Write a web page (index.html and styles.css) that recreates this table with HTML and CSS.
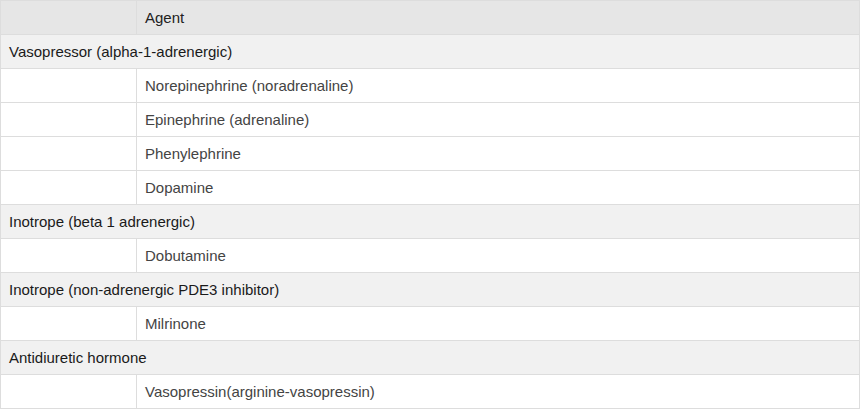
FILE: index.html
```html
<!DOCTYPE html>
<html>
<head>
<meta charset="utf-8">
<link rel="stylesheet" href="styles.css">
</head>
<body>
<table class="drugs">
  <thead>
    <tr class="head"><th class="c1"></th><th>Agent</th></tr>
  </thead>
  <tbody>
    <tr class="group"><td colspan="2">Vasopressor (alpha-1-adrenergic)</td></tr>
    <tr class="item"><td class="c1"></td><td>Norepinephrine (noradrenaline)</td></tr>
    <tr class="item"><td class="c1"></td><td>Epinephrine (adrenaline)</td></tr>
    <tr class="item"><td class="c1"></td><td>Phenylephrine</td></tr>
    <tr class="item"><td class="c1"></td><td>Dopamine</td></tr>
    <tr class="group"><td colspan="2">Inotrope (beta 1 adrenergic)</td></tr>
    <tr class="item"><td class="c1"></td><td>Dobutamine</td></tr>
    <tr class="group"><td colspan="2">Inotrope (non-adrenergic PDE3 inhibitor)</td></tr>
    <tr class="item"><td class="c1"></td><td>Milrinone</td></tr>
    <tr class="group"><td colspan="2">Antidiuretic hormone</td></tr>
    <tr class="item"><td class="c1"></td><td>Vasopressin(arginine-vasopressin)</td></tr>
  </tbody>
</table>
</body>
</html>
```
FILE: styles.css
```css
html, body {
  margin: 0;
  padding: 0;
  background: #fff;
}
.drugs {
  width: 860px;
  border-collapse: collapse;
  font-family: "Liberation Sans", Arial, sans-serif;
  font-size: 15px;
  line-height: 17px;
}
.drugs th, .drugs td {
  border: 1px solid #dddddd;
  padding: 8px 8px 8px 8px;
  height: 17px;
  text-align: left;
  font-weight: normal;
  vertical-align: middle;
}
.drugs .c1 {
  width: 119px;
}
.head th {
  background: #e6e6e6;
  color: #222;
}
.group td {
  background: #f1f1f1;
  color: #1a1a1a;
}
.item td {
  background: #fff;
  color: #444;
}
```
